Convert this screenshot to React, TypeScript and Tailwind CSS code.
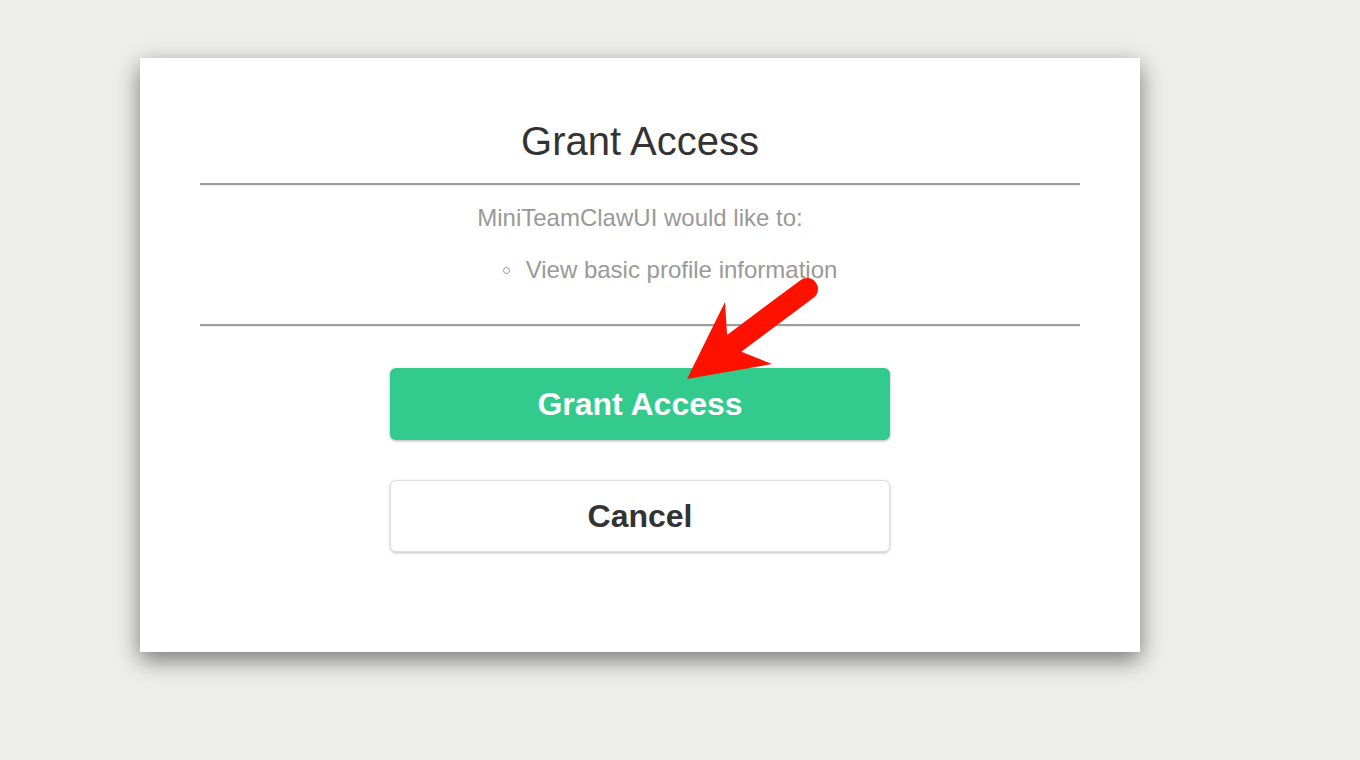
export default function App() {
  return (
    <div className="min-h-screen bg-[#eeeeed] pt-[58px] pl-[140px] font-['Liberation_Sans',Arial,sans-serif]">
      <div className="relative w-[1000px] h-[594px] bg-white px-[60px] pt-[60px] shadow-[0_8px_22px_rgba(0,0,0,0.5)]">
        {/* Header */}
        <h1 className="text-center text-[40px] leading-[46px] text-[#333333]">Grant Access</h1>
        <div className="mt-[19px] border-t-2 border-b border-t-[#9d9d9d] border-b-[#ececec]" />

        {/* Scopes */}
        <p className="mt-[18px] text-center text-[24px] leading-[28px] text-[#999999]">
          MiniTeamClawUI would like to:
        </p>
        <div className="mt-[24px] flex items-center justify-center gap-[16px] pl-[60px]">
          <span className="h-[7px] w-[7px] rounded-full border border-[#999999]" />
          <span className="text-[24px] leading-[28px] text-[#999999]">View basic profile information</span>
        </div>
        <div className="mt-[40px] border-t-2 border-b border-t-[#9d9d9d] border-b-[#ececec]" />

        {/* Actions */}
        <div className="mt-[41px] flex flex-col items-center gap-[40px]">
          <button className="h-[72px] w-[500px] rounded-[6px] bg-[#32cb8d] text-[32px] font-bold text-white shadow-[0_1px_3px_rgba(0,0,0,0.3)]">
            Grant Access
          </button>
          <button className="h-[72px] w-[500px] rounded-[6px] border border-[#dddddd] bg-white text-[32px] font-bold text-[#333333] shadow-[0_1px_3px_rgba(0,0,0,0.25)]">
            Cancel
          </button>
        </div>

        {/* Annotation arrow */}
        <svg className="pointer-events-none absolute left-0 top-0" width="1000" height="594" viewBox="0 0 1000 594">
          <line x1="596" y1="284" x2="667" y2="231" stroke="#ff1100" strokeWidth="22" strokeLinecap="round" />
          <polygon points="547,321 585,244 587,276 602,294 632,306" fill="#ff1100" />
        </svg>
      </div>
    </div>
  );
}
